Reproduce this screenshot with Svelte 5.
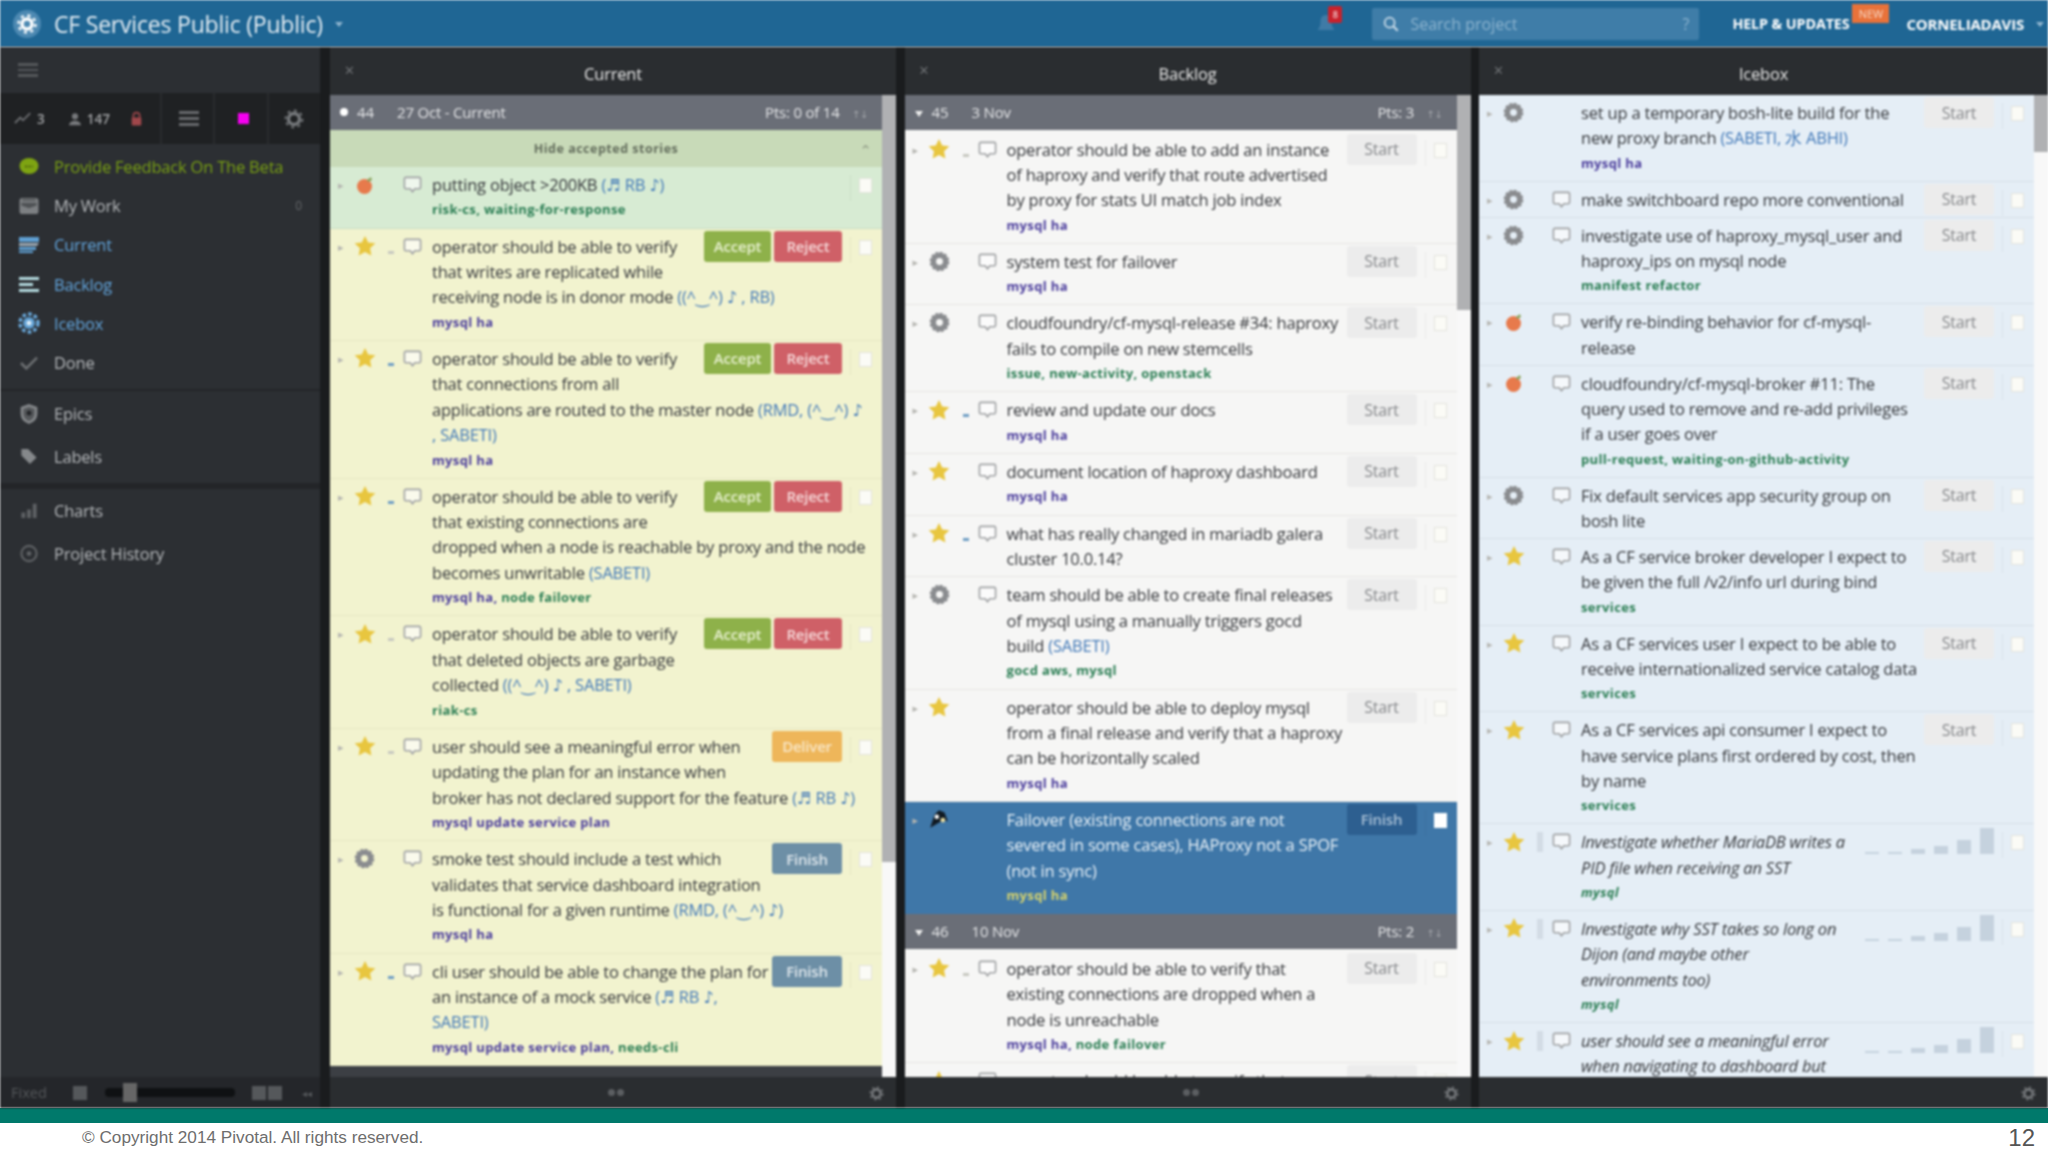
<script>
  const current = [
    { kind: 'bug', cls: 'accepted', lines: [['putting object >200KB  ', '(♬ RB ♪)']], labels: [['g', 'risk-cs, waiting-for-response']], act: 'none' },
    { kind: 'star', mark: 1, lines: [['operator should be able to verify'], ['that writes are replicated while'], ['receiving node is in donor mode ', '((^‿^) ♪ , RB)']], labels: [['v', 'mysql ha']], act: 'ar' },
    { kind: 'star', mark: 2, lines: [['operator should be able to verify'], ['that connections from all'], ['applications are routed to the master node ', '(RMD, (^‿^) ♪'], ['', ', SABETI)']], labels: [['v', 'mysql ha']], act: 'ar' },
    { kind: 'star', mark: 2, lines: [['operator should be able to verify'], ['that existing connections are'], ['dropped when a node is reachable by proxy and the node'], ['becomes unwritable ', '(SABETI)']], labels: [['v', 'mysql ha, '], ['g', 'node failover']], act: 'ar' },
    { kind: 'star', mark: 1, lines: [['operator should be able to verify'], ['that deleted objects are garbage'], ['collected ', '((^‿^) ♪ , SABETI)']], labels: [['g', 'riak-cs']], act: 'ar' },
    { kind: 'star', mark: 1, lines: [['user should see a meaningful error when'], ['updating the plan for an instance when'], ['broker has not declared support for the feature ', '(♬ RB ♪)']], labels: [['v', 'mysql update service plan']], act: 'deliver' },
    { kind: 'chore', lines: [['smoke test should include a test which'], ['validates that service dashboard integration'], ['is functional for a given runtime ', '(RMD, (^‿^) ♪)']], labels: [['v', 'mysql ha']], act: 'finish' },
    { kind: 'star', mark: 2, lines: [['cli user should be able to change the plan for'], ['an instance of a mock service ', '(♬ RB ♪,'], ['', 'SABETI)']], labels: [['v', 'mysql update service plan, '], ['g', 'needs-cli']], act: 'finish' }
  ];
  const backlog1 = [
    { kind: 'star', mark: 1, lines: [['operator should be able to add an instance'], ['of haproxy and verify that route advertised'], ['by proxy for stats UI match job index']], labels: [['v', 'mysql ha']], act: 'start' },
    { kind: 'chore', lines: [['system test for failover']], labels: [['v', 'mysql ha']], act: 'start' },
    { kind: 'chore', lines: [['cloudfoundry/cf-mysql-release #34: haproxy'], ['fails to compile on new stemcells']], labels: [['g', 'issue, new-activity, openstack']], act: 'start' },
    { kind: 'star', mark: 2, lines: [['review and update our docs']], labels: [['v', 'mysql ha']], act: 'start' },
    { kind: 'star', lines: [['document location of haproxy dashboard']], labels: [['v', 'mysql ha']], act: 'start' },
    { kind: 'star', mark: 2, lines: [['what has really changed in mariadb galera'], ['cluster 10.0.14?']], labels: [], act: 'start' },
    { kind: 'chore', lines: [['team should be able to create final releases'], ['of mysql using a manually triggers gocd'], ['build ', '(SABETI)']], labels: [['g', 'gocd aws, mysql']], act: 'start' },
    { kind: 'star', nocomment: 1, lines: [['operator should be able to deploy mysql'], ['from a final release and verify that a haproxy'], ['can be horizontally scaled']], labels: [['v', 'mysql ha']], act: 'start' },
    { kind: 'pirate', nocomment: 1, sel: 1, cls: 'selected', lines: [['Failover (existing connections are not'], ['severed in some cases), HAProxy not a SPOF'], ['(not in sync)']], labels: [['y', 'mysql ha']], act: 'finishsel' }
  ];
  const backlog2 = [
    { kind: 'star', mark: 1, lines: [['operator should be able to verify that'], ['existing connections are dropped when a'], ['node is unreachable']], labels: [['v', 'mysql ha, '], ['g', 'node failover']], act: 'start' },
    { kind: 'star', mark: 1, lines: [['operator should be able to verify that a']], labels: [], act: 'start' }
  ];
  const icebox = [
    { kind: 'chore', nocomment: 1, lines: [['set up a temporary bosh-lite build for the'], ['new proxy branch ', '(SABETI, 水 ABHI)']], labels: [['v', 'mysql ha']], act: 'start' },
    { kind: 'chore', lines: [['make switchboard repo more conventional']], labels: [], act: 'start' },
    { kind: 'chore', lines: [['investigate use of haproxy_mysql_user and'], ['haproxy_ips on mysql node']], labels: [['g', 'manifest refactor']], act: 'start' },
    { kind: 'bug', lines: [['verify re-binding behavior for cf-mysql-'], ['release']], labels: [], act: 'start' },
    { kind: 'bug', lines: [['cloudfoundry/cf-mysql-broker #11: The'], ['query used to remove and re-add privileges'], ['if a user goes over']], labels: [['g', 'pull-request, waiting-on-github-activity']], act: 'start' },
    { kind: 'chore', lines: [['Fix default services app security group on'], ['bosh lite']], labels: [], act: 'start' },
    { kind: 'star', lines: [['As a CF service broker developer I expect to'], ['be given the full /v2/info url during bind']], labels: [['g', 'services']], act: 'start' },
    { kind: 'star', lines: [['As a CF services user I expect to be able to'], ['receive internationalized service catalog data']], labels: [['g', 'services']], act: 'start' },
    { kind: 'star', lines: [['As a CF services api consumer I expect to'], ['have service plans first ordered by cost, then'], ['by name']], labels: [['g', 'services']], act: 'start' },
    { kind: 'star', mark: 3, it: 1, lines: [['Investigate whether MariaDB writes a'], ['PID file when receiving an SST']], labels: [['g', 'mysql']], act: 'est' },
    { kind: 'star', mark: 3, it: 1, lines: [['Investigate why SST takes so long on'], ['Dijon (and maybe other'], ['environments too)']], labels: [['g', 'mysql']], act: 'est' },
    { kind: 'star', mark: 3, it: 1, lines: [['user should see a meaningful error'], ['when navigating to dashboard but']], labels: [], act: 'est' }
  ];
  const bars = [2, 2, 5, 8, 14, 26];
</script>

{#snippet icon(kind)}
  {#if kind === 'star'}
    <svg viewBox="0 0 20 20" width="22" height="22"><path d="M10 .8l2.9 6 6.5.8-4.8 4.5 1.2 6.5L10 15.4l-5.8 3.2 1.2-6.5L.6 7.6l6.5-.8z" fill="#e8c63f"/></svg>
  {:else if kind === 'bug'}
    <svg viewBox="0 0 20 20" width="20" height="22"><circle cx="9.5" cy="11.5" r="7.5" fill="#e77a4c"/><path d="M12 5l4-3 1 3-4 2z" fill="#8aa35c"/></svg>
  {:else if kind === 'chore'}
    <svg viewBox="0 0 20 20" width="21" height="21"><circle cx="10" cy="10" r="5.800" fill="none" stroke="#8a8c8f" stroke-width="5"/><circle cx="10" cy="10" r="8.600" fill="none" stroke="#8a8c8f" stroke-width="1.500" stroke-dasharray="3 1.500"/></svg>
  {:else}
    <svg viewBox="0 0 20 20" width="22" height="22"><path d="M2 18l4-12 4-4 5 2 3 8-4-1z" fill="#111a22"/><circle cx="8" cy="8" r="2" fill="#fff"/><circle cx="13.500" cy="11" r="2.200" fill="#e8dca0"/></svg>
  {/if}
{/snippet}

{#snippet gear(size)}
  <svg viewBox="0 0 20 20" width={size} height={size}><circle cx="10" cy="10" r="5.500" fill="none" stroke="#76797c" stroke-width="3.400"/><circle cx="10" cy="10" r="8.500" fill="none" stroke="#76797c" stroke-width="1.800" stroke-dasharray="3 3.600"/></svg>
{/snippet}

{#snippet row(s)}
  <div class="row {s.cls ?? ''}">
    <span class="chev">▸</span>
    <span class="kind">{@render icon(s.kind)}</span>
    <span class="mark">
      {#if s.mark === 1}<i class="m1"></i>{:else if s.mark === 2}<i class="m2"></i>{:else if s.mark === 3}<i class="m3"></i>{/if}
    </span>
    <span class="cmt">
      {#if !s.nocomment}
        <svg viewBox="0 0 20 20" width="19" height="19"><path d="M3 2.500h14a1.500 1.500 0 0 1 1.500 1.500v9a1.500 1.500 0 0 1-1.500 1.500h-4.500L10 17.500l-2.500-3H3A1.500 1.500 0 0 1 1.500 13V4A1.500 1.500 0 0 1 3 2.500z" fill="#fff" fill-opacity=".6" stroke="#a0a2a4" stroke-width="1.700"/></svg>
      {/if}
    </span>
    <div class="body" class:it={s.it}>
      {#each s.lines as l}
        <div class="line">{l[0]}{#if l[1]}<span class="own">{l[1]}</span>{/if}</div>
      {/each}
      {#if s.labels.length}
        <div class="line labels">{#each s.labels as t}<span class={t[0]}>{t[1]}</span>{/each}</div>
      {/if}
    </div>
    <div class="act">
      {#if s.act === 'ar'}
        <button class="btn accept">Accept</button><button class="btn reject">Reject</button>
      {:else if s.act === 'deliver'}
        <button class="btn deliver">Deliver</button>
      {:else if s.act === 'finish'}
        <button class="btn finish">Finish</button>
      {:else if s.act === 'finishsel'}
        <button class="btn finishsel">Finish</button>
      {:else if s.act === 'start'}
        <button class="btn start">Start</button>
      {:else if s.act === 'est'}
        <div class="est">{#each bars as b}<i style="height:{b}px"></i>{/each}</div>
      {/if}
    </div>
    <span class="check" class:on={s.sel}></span>
  </div>
{/snippet}

{#snippet iter(num, date, pts, open)}
  <div class="iter">
    <span class="iter-l"><i class={open ? 'dot' : 'tri'}></i><b>{num}</b><span class="date">{date}</span></span>
    <span class="iter-r">{pts}<em>↑↓</em></span>
  </div>
{/snippet}

{#snippet foot()}
  <div class="pfoot"><span class="dots"><i></i><i></i></span><span class="pgear">{@render gear(15)}</span></div>
{/snippet}

<div class="screen">
  <header class="top">
    <div class="logo">
      <svg viewBox="0 0 30 30" width="30" height="30"><circle cx="15" cy="15" r="14" fill="#4d89b2"/><circle cx="15" cy="15" r="5" fill="none" stroke="#fff" stroke-width="3.500"/><circle cx="15" cy="15" r="8.500" fill="none" stroke="#fff" stroke-width="2.500" stroke-dasharray="3 3.700"/></svg>
    </div>
    <div class="title">CF Services Public (Public)</div>
    <i class="caret"></i>
    <div class="spacer"></div>
    <div class="bell">
      <svg viewBox="0 0 20 24" width="20" height="24"><path d="M10 3c4 0 5.500 3 5.500 7s1.500 6 3 8H1.500c1.500-2 3-4 3-8s1.500-7 5.500-7z" fill="#3f7ba6"/></svg>
      <span class="badge">8</span>
    </div>
    <div class="search">
      <svg viewBox="0 0 20 20" width="18" height="18"><circle cx="8.500" cy="8.500" r="5.500" fill="none" stroke="#c9dbe8" stroke-width="2"/><path d="M12.500 12.500l5 5" stroke="#c9dbe8" stroke-width="2.400"/></svg>
      <span class="ph">Search project</span><span class="q">?</span>
    </div>
    <div class="help">HELP &amp; UPDATES<span class="new">NEW</span></div>
    <div class="user">CORNELIADAVIS</div>
    <i class="caret"></i>
  </header>

  <div class="main">
    <aside class="side">
      <div class="burger"><i></i><i></i><i></i></div>
      <div class="stats">
        <div class="st a">
          <svg viewBox="0 0 20 14" width="18" height="13"><path d="M1 12l6-6 3 3 8-8" fill="none" stroke="#6d6f72" stroke-width="2"/></svg><span>3</span>
          <svg class="pers" viewBox="0 0 16 16" width="14" height="14"><circle cx="8" cy="5" r="3.500" fill="#77797c"/><path d="M1 15c1-4 4-5 7-5s6 1 7 5z" fill="#77797c"/></svg><span>147</span>
          <svg class="lock" viewBox="0 0 16 20" width="13" height="16"><path d="M4 9V6a4 4 0 0 1 8 0v3" fill="none" stroke="#a0474b" stroke-width="2"/><rect x="2" y="8" width="12" height="10" rx="1.500" fill="#a0474b"/></svg>
        </div>
        <div class="st b"><div class="lst"><i></i><i></i><i></i></div></div>
        <div class="st b"><span class="mag"></span></div>
        <div class="st b">{@render gear(20)}</div>
      </div>
      <nav class="nav">
        <div class="item green"><svg viewBox="0 0 22 20" width="21" height="19"><ellipse cx="11" cy="9.500" rx="10" ry="8.500" fill="#7ea412"/><path d="M7 10h8" stroke="#3c4d0a" stroke-width="1.500" stroke-dasharray="2 1.500"/></svg><span>Provide Feedback On The Beta</span></div>
        <div class="item">
          <svg viewBox="0 0 22 20" width="21" height="19"><rect x="1" y="2" width="20" height="17" rx="3" fill="#7d8083"/><path d="M3 7h16v3l-8 3-8-3z" fill="#4f5255"/><rect x="4" y="3" width="14" height="2" fill="#54575a"/></svg>
          <span>My Work</span><span class="zero">0</span>
        </div>
        <div class="item blue">
          <svg viewBox="0 0 22 18" width="22" height="18"><path d="M1 1h20v5H1z" fill="#5f9fd2"/><path d="M1 7h20l-2 3H1z" fill="#9aa8b3"/><path d="M1 11h17v3H1zM1 15h14v2H1z" fill="#5f9fd2"/></svg>
          <span>Current</span>
        </div>
        <div class="item blue">
          <svg viewBox="0 0 22 18" width="22" height="18"><path d="M1 2h20v3H1zM1 8h14v3H1zM1 14h20v3H1z" fill="#b5dbe0"/></svg>
          <span>Backlog</span>
        </div>
        <div class="item blue">
          <svg viewBox="0 0 22 22" width="22" height="22"><circle cx="11" cy="11" r="6" fill="#5f9fd2"/><circle cx="11" cy="11" r="2.500" fill="#dcecf8"/><circle cx="11" cy="11" r="9" fill="none" stroke="#6aaadd" stroke-width="3.400" stroke-dasharray="3.600 2.300"/></svg>
          <span>Icebox</span>
        </div>
        <div class="item">
          <svg viewBox="0 0 22 18" width="20" height="16"><path d="M2 9l6 6L20 3" fill="none" stroke="#6b6e71" stroke-width="3"/></svg>
          <span>Done</span>
        </div>
        <div class="rule"></div>
        <div class="item tall">
          <svg viewBox="0 0 20 20" width="20" height="20"><path d="M10 1.500l7 2.500v6c0 4.500-3 7-7 8.500-4-1.500-7-4-7-8.500V4z" fill="#55585b" stroke="#85888b" stroke-width="2.600"/><circle cx="10" cy="9" r="2.500" fill="#242629"/></svg>
          <span>Epics</span>
        </div>
        <div class="item tall">
          <svg viewBox="0 0 20 20" width="19" height="19"><path d="M2 2h7l9 9-7 7-9-9z" fill="#85888b"/></svg>
          <span>Labels</span>
        </div>
        <div class="rule two"></div>
        <div class="item tall">
          <svg viewBox="0 0 20 20" width="19" height="19"><path d="M2 18v-6h4v6zm6 0V9h4v9zm6 0V3h4v15z" fill="#5f6265"/></svg>
          <span>Charts</span>
        </div>
        <div class="item tall">
          <svg viewBox="0 0 20 20" width="19" height="19"><circle cx="10" cy="10" r="8" fill="none" stroke="#606366" stroke-width="2.200"/><circle cx="10" cy="10" r="2.500" fill="#606366"/></svg>
          <span>Project History</span>
        </div>
      </nav>
      <div class="sfoot">
        <span class="fixed">Fixed</span>
        <span class="one"></span>
        <span class="slider"><i></i></span>
        <span class="one"></span><span class="one second"></span>
        <span class="coll">◂◂</span>
      </div>
    </aside>

    <div class="panels">
      <section class="panel">
        <div class="phead"><span class="x">✕</span><span class="pt">Current</span></div>
        <div class="pbody">
          <div class="list">
            {@render iter('44', '27 Oct - Current', 'Pts: 0 of 14', true)}
            <div class="hide"><span>Hide accepted stories</span><em>⌃</em></div>
            {#each current as s}{@render row(s)}{/each}
          </div>
          <div class="sb"><i style="height:767px"></i></div>
        </div>
        {@render foot()}
      </section>

      <section class="panel">
        <div class="phead"><span class="x">✕</span><span class="pt">Backlog</span></div>
        <div class="pbody">
          <div class="list">
            {@render iter('45', '3 Nov', 'Pts: 3', false)}
            {#each backlog1 as s}{@render row(s)}{/each}
            {@render iter('46', '10 Nov', 'Pts: 2', false)}
            {#each backlog2 as s}{@render row(s)}{/each}
          </div>
          <div class="sb"><i style="height:215px"></i></div>
        </div>
        {@render foot()}
      </section>

      <section class="panel last">
        <div class="phead"><span class="x">✕</span><span class="pt">Icebox</span></div>
        <div class="pbody">
          <div class="list ice">
            {#each icebox as s}{@render row(s)}{/each}
          </div>
          <div class="sb"><i style="height:57px"></i></div>
        </div>
        <div class="pfoot"><span class="pgear">{@render gear(15)}</span></div>
      </section>
    </div>
  </div>

  <div class="teal"></div>
  <footer class="bottom">
    <span>© Copyright 2014 Pivotal. All rights reserved.</span>
    <span class="pg">12</span>
  </footer>
</div>

<style>
  :global(body) { margin: 0; overflow: hidden; background: #fff; }
  * { box-sizing: border-box; }
  .screen {
    width: 2048px; height: 1152px; display: grid; grid-template-columns: 2048px; grid-template-rows: 47px 1061px 15px 29px;
    font-family: "Open Sans", "DejaVu Sans", sans-serif; overflow: hidden;
  }
  .top, .main { filter: blur(.8px); min-width: 0; }

  .top { background: #1f6694; display: flex; align-items: center; color: #e6eef4; padding: 0 4px 0 12px; }
  .logo { display: flex; width: 42px; }
  .title { font-size: 23px; letter-spacing: -.2px; }
  .caret { width: 0; height: 0; border: 4px solid transparent; border-top: 5px solid #8fb5cf; border-bottom: 0; margin-left: 12px; margin-top: 2px; }
  .spacer { flex: 1; }
  .bell { position: relative; display: flex; margin-right: 36px; }
  .badge { position: absolute; left: 12px; top: -6px; width: 14px; height: 17px; background: #c8222c; border-radius: 2px; font-size: 9px; color: #fff; text-align: center; line-height: 17px; }
  .search { width: 327px; height: 32px; background: #3f7da8; border-radius: 2px; display: flex; align-items: center; padding: 0 10px; gap: 10px; color: #8db4cf; font-size: 16px; margin-right: 33px; }
  .ph { flex: 1; }
  .help { position: relative; width: 117px; white-space: nowrap; font-size: 14.300px; font-weight: 700; color: #fff; margin-right: 57px; letter-spacing: -.1px; }
  .new { position: absolute; left: 120px; top: -10px; width: 37px; height: 19px; background: #e8723a; color: #f7d9c8; font-size: 11px; text-align: center; line-height: 19px; font-weight: 400; }
  .user { font-size: 15px; font-weight: 700; color: #fff; letter-spacing: -.2px; }

  .main { background: #1a1c1e; display: flex; min-height: 0; }
  .side { width: 320px; background: #2c2f33; display: flex; flex-direction: column; color: #b4b7ba; flex-shrink: 0; }
  .burger { height: 46px; padding: 16px 18px; display: flex; flex-direction: column; gap: 3px; }
  .burger i { height: 4px; width: 20px; background: #54575a; display: block; }
  .stats { height: 51px; background: #1f2123; display: flex; align-items: stretch; }
  .st { display: flex; align-items: center; justify-content: center; border-left: 2px solid #292b2e; }
  .st.a { width: 160px; border: 0; justify-content: flex-start; gap: 5px; padding-left: 14px; font-size: 13.500px; color: #a0a2a4; font-weight: 600; }
  .st.b { width: 53.500px; }
  .pers { margin-left: 18px; }
  .lock { margin-left: 15px; }
  .lst { display: flex; flex-direction: column; gap: 3px; margin-left: 3px; }
  .lst i { display: block; width: 20px; height: 3px; background: #67696c; }
  .mag { width: 11px; height: 11px; background: #f500f0; display: block; margin-left: 6px; }

  .nav { flex: 1; padding-top: 3px; }
  .item { height: 39.200px; display: flex; align-items: center; gap: 14px; padding-left: 18px; font-size: 16.500px; position: relative; letter-spacing: -.2px; }
  .item svg { flex-shrink: 0; width: 22px; }
  .item.green { color: #79a013; }
  .item.blue { color: #62a5dd; }
  .item.tall { height: 43px; }
  .zero { position: absolute; right: 18px; font-size: 12px; color: #64676a; }
  .rule { height: 2px; background: #232528; margin: 7px 0 1px; }
  .rule.two { height: 6px; margin: 5px 0 0; }
  .sfoot { height: 31px; background: #24262a; display: flex; align-items: center; gap: 0; padding-left: 11px; color: #55585b; font-size: 14.500px; }
  .fixed { width: 62px; }
  .one { width: 14px; height: 14px; background: #55585b; display: block; }
  .slider { margin: 0 17px 0 18px; width: 130px; height: 9px; background: #0f1113; position: relative; border-radius: 4px; }
  .slider i { position: absolute; left: 18px; top: -5px; width: 14px; height: 19px; background: #666; }
  .second { margin-left: 2px; }
  .coll { margin-left: 20px; font-size: 10px; }

  .panels { flex: 1; display: flex; gap: 8.500px; padding-left: 10px; min-width: 0; }
  .panel { flex: 0 0 566px; min-width: 0; display: flex; flex-direction: column; background: #2a2d30; }
  .panel.last { flex: 1 1 0; }
  .phead { height: 48px; position: relative; display: flex; align-items: center; justify-content: center; color: #e8e8e8; font-size: 16.500px; flex-shrink: 0; padding-top: 4px; letter-spacing: -.2px; }
  .x { position: absolute; left: 14px; top: 14px; color: #6d7073; font-size: 13px; }
  .pbody { height: 982px; display: flex; background: #3c3f44; overflow: hidden; }
  .list { flex: 1; min-width: 0; overflow: hidden; }
  .sb { width: 14px; background: #f8f8f8; flex-shrink: 0; }
  .sb i { display: block; background: #b0b1b3; }
  .pfoot { flex: 1; position: relative; display: flex; align-items: center; justify-content: center; background: #2a2d30; padding-left: 6px; }
  .dots { display: flex; gap: 2px; }
  .dots i { width: 7px; height: 7px; border-radius: 50%; background: #5c5f62; display: block; }
  .pgear { position: absolute; right: 12px; top: 9px; display: flex; }

  .iter { height: 35px; background: #6a6e77; display: flex; align-items: center; justify-content: space-between; color: #e4e5e7; font-size: 15px; padding: 0 14px 1px 10px; letter-spacing: -.2px; }
  .iter-l { display: flex; align-items: center; }
  .iter-l b { font-weight: 400; margin-left: 9px; width: 40px; }
  .dot { width: 8px; height: 8px; border-radius: 50%; background: #fff; display: block; }
  .tri { width: 0; height: 0; border: 4px solid transparent; border-top: 6px solid #eee; border-bottom: 0; margin-top: 4px; display: block; }
  .iter-r em { font-style: normal; font-size: 10px; color: #a5a8ad; margin-left: 12px; }
  .hide { height: 37px; background: #c8dab8; display: flex; align-items: center; justify-content: center; position: relative; color: #636d5c; font-size: 12.500px; font-weight: 700; letter-spacing: .5px; padding-top: 0; }
  .hide em { position: absolute; right: 10px; top: 10px; font-style: normal; color: #96a28c; font-size: 14px; }

  .row { display: flex; background: #f6f6f5; border-bottom: 1px solid #e6e5e3; padding: 5px 0 4.800px 0; position: relative; color: #35373b; }
  .iter + .row { padding-top: 6.500px; }
  .panel:first-child .row { background: #f2f3cf; border-bottom-color: #e6e7c4; }
  .panel:first-child .row.accepted { background: #d7ebd3; border-bottom-color: #c8ddc4; }
  .list.ice .row { background: #e5eef6; border-bottom-color: #d7e0e8; padding-bottom: 4.500px; }
  .list .row.selected { background: #3f77a8; color: #eaf2f8; border-bottom-color: #3f77a8; }
  .chev { width: 23px; padding-left: 8px; color: #b5b5b0; font-size: 11px; line-height: 25px; flex-shrink: 0; }
  .kind { width: 23px; height: 25px; display: flex; align-items: center; justify-content: center; flex-shrink: 0; }
  .mark { width: 27px; height: 25px; position: relative; flex-shrink: 0; }
  .m1, .m2, .m3 { position: absolute; left: 12px; top: 17px; width: 6px; height: 3px; background: #c7c8c0; display: block; }
  .m2 { background: #6f9ec4; }
  .m3 { top: 3px; height: 20px; background: #d3dce5; }
  .cmt { width: 29px; height: 25px; display: flex; align-items: center; flex-shrink: 0; }
  .body { flex: 1; min-width: 0; font-size: 16.500px; line-height: 25.400px; letter-spacing: -.2px; }
  .line { white-space: nowrap; height: 25.400px; }
  .it { font-style: italic; }
  .own { color: #4279b8; }
  .labels { font-size: 13px; font-weight: 700; letter-spacing: .35px; }
  .v { color: #4b3d9c; }
  .g { color: #2a7d53; }
  .y { color: #d7d36d; }
  .act { display: flex; gap: 3px; flex-shrink: 0; margin-left: auto; position: relative; z-index: 1; height: 25px; margin-top: -3px; }
  .btn { font: inherit; font-size: 15px; font-weight: 600; border: 0; border-radius: 3px; height: 31px; padding: 0; letter-spacing: -.2px; }
  .accept { width: 67px; background: #8eb14a; color: #e7f0d0; }
  .reject { width: 68px; background: #cf6067; color: #f5d8d8; }
  .deliver, .finish, .start, .finishsel { width: 70px; }
  .deliver { background: #eeb65a; color: #f8e6c6; }
  .finish { background: #6d8fa6; color: #dfe7ec; }
  .start { background: #ececec; color: #85878a; font-weight: 400; font-size: 16px; }
  .finishsel { background: #2d5f90; color: #a9c0d6; }
  .est { display: flex; align-items: flex-end; gap: 9px; width: 129px; height: 28px; }
  .est i { display: block; width: 14px; background: #c5d2de; }
  .check { width: 13px; height: 15px; background: #fbfbf6; border: 1px solid #e3e3dd; margin: 6px 10px 0 17px; flex-shrink: 0; position: relative; }
  .check::before { content: ""; position: absolute; left: -10px; top: -4px; width: 1px; height: 26px; background: rgba(0, 0, 0, .05); }
  .check.on { background: #fff; border-color: #fff; }

  .teal { background: #00796b; }
  .bottom { background: #fff; color: #6e6e6e; display: flex; justify-content: space-between; align-items: center; padding: 0 13px 0 82px; font-family: "Liberation Sans", Arial, sans-serif; font-size: 17.200px; }
  .pg { font-size: 24px; color: #555; }
</style>
